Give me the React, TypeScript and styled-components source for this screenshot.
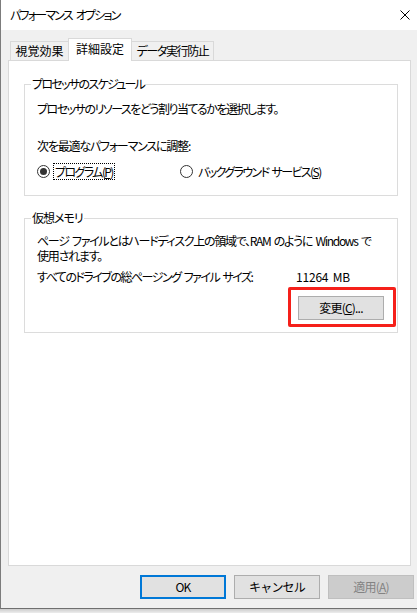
import React from 'react';
import styled, { createGlobalStyle } from 'styled-components';

const GlobalStyle = createGlobalStyle`
  html, body { margin: 0; padding: 0; background: #ececec; }
  body {
    font-family: "Noto Sans CJK JP", "Noto Sans", sans-serif;
    font-size: 12px;
    color: #000;
    font-feature-settings: "palt";
    letter-spacing: -1.2px;
    word-spacing: 2px;
  }
  * { box-sizing: border-box; }
`;

const Window = styled.div`
  width: 417px;
  height: 609px;
  background: #f0f0f0;
  border-left: 1px solid #7c7c7c;
  border-bottom: 1px solid #6f6f6f;
  display: flex;
  flex-direction: column;
`;

const Shadow = styled.div`
  height: 4px;
  background: linear-gradient(#cdcdcd, #ededed);
`;

const TitleBar = styled.div`
  height: 30px;
  flex: none;
  background: #fff;
  display: flex;
  align-items: center;
  justify-content: space-between;
  padding: 0 7px 0 9px;
`;

const Title = styled.span`
  font-size: 12px;
  line-height: 16px;
  letter-spacing: -1.8px;
  word-spacing: 3px;
`;

const CloseButton = styled.span`
  display: flex;
  width: 10px;
  height: 10px;
`;

const Body = styled.div`
  flex: 1;
  display: flex;
  flex-direction: column;
  padding: 8px 0 0 7px;
`;

const TabStrip = styled.div`
  display: flex;
  align-items: flex-end;
  height: 22px;
  padding-left: 2px;
  position: relative;
  z-index: 1;
`;

const Tab = styled.div<{ $active?: boolean; $w: number; $ls?: number }>`
  width: ${p => p.$w}px;
  height: ${p => (p.$active ? 23 : 19)}px;
  margin-bottom: ${p => (p.$active ? -1 : 0)}px;
  margin-left: -1px;
  &:first-child { margin-left: 0; }
  border: 1px solid #d9d9d9;
  border-bottom: none;
  background: ${p => (p.$active ? '#fff' : '#f0f0f0')};
  position: relative;
  z-index: ${p => (p.$active ? 2 : 1)};
  display: flex;
  align-items: center;
  justify-content: center;
  padding-bottom: ${p => (p.$active ? 2 : 0)}px;
  line-height: 16px;
  letter-spacing: ${p => p.$ls ?? 0}px;
  white-space: nowrap;
`;

const Panel = styled.div`
  width: 403px;
  height: 506px;
  flex: none;
  background: #fff;
  border: 1px solid #d9d9d9;
  padding: 15px 12px 0 15px;
  display: flex;
  flex-direction: column;
`;

const Group = styled.fieldset<{ $gap?: number }>`
  margin: ${p => p.$gap ?? 0}px 0 0 0;
  padding: 0;
  min-width: 0;
  border: 1px solid #dcdcdc;
`;

const Legend = styled.legend<{ $ls?: number }>`
  margin-left: 6px;
  padding: 0 1px;
  line-height: 16px;
  font-size: 12px;
  letter-spacing: ${p => p.$ls ?? -1.2}px;
`;

const GroupBody = styled.div<{ $pad: string }>`
  padding: ${p => p.$pad};
  display: flex;
  flex-direction: column;
`;

const Line = styled.div<{ $lh?: number; $mt?: number; $ls?: number }>`
  line-height: ${p => p.$lh ?? 16}px;
  margin-top: ${p => p.$mt ?? 0}px;
  letter-spacing: ${p => p.$ls ?? -1.2}px;
  white-space: nowrap;
`;

const RadioRow = styled.div`
  display: flex;
  align-items: center;
  height: 17px;
  margin-top: 9px;
`;

const RadioItem = styled.label<{ $w?: number }>`
  display: flex;
  align-items: center;
  width: ${p => (p.$w ? `${p.$w}px` : 'auto')};
  flex: none;
`;

const RadioCircle = styled.span<{ $on?: boolean }>`
  width: 13px;
  height: 13px;
  border-radius: 50%;
  border: 1px solid #333;
  display: flex;
  align-items: center;
  justify-content: center;
  margin-right: 3px;
  &::after {
    content: "";
    width: 7px;
    height: 7px;
    border-radius: 50%;
    background: ${p => (p.$on ? '#333' : 'transparent')};
  }
`;

const RadioLabel = styled.span<{ $focus?: boolean }>`
  line-height: 15px;
  padding: 0 1px;
  border: 1px dotted ${p => (p.$focus ? '#000' : 'transparent')};
  letter-spacing: -1.6px;
  white-space: nowrap;
`;

const SizeRow = styled.div`
  display: flex;
  line-height: 15px;
  margin-top: 6px;
`;

const SizeLabel = styled.span`
  width: 259px;
  flex: none;
  letter-spacing: -1.5px;
  white-space: nowrap;
`;

const SizeValue = styled.span`
  letter-spacing: -0.2px;
`;

const ActionRow = styled.div`
  display: flex;
  justify-content: flex-end;
  margin-top: 12px;
`;

const Highlight = styled.div`
  position: relative;
  display: flex;
`;

const HighlightFrame = styled.span`
  position: absolute;
  top: -9px;
  left: -10px;
  right: -12px;
  bottom: -7px;
  border: 3px solid #f5201a;
  border-radius: 2px;
  pointer-events: none;
`;

const Button = styled.button<{ $variant?: 'default' | 'primary' | 'disabled'; $h?: number }>`
  width: 86px;
  height: ${p => p.$h ?? 24}px;
  font-family: inherit;
  font-size: 12px;
  line-height: 16px;
  letter-spacing: -0.8px;
  padding: 0;
  margin: 0;
  border-radius: 0;
  color: ${p => (p.$variant === 'disabled' ? '#838383' : '#000')};
  background: ${p => (p.$variant === 'disabled' ? '#cccccc' : '#e1e1e1')};
  border: ${p =>
    p.$variant === 'primary'
      ? '2px solid #0078d7'
      : p.$variant === 'disabled'
      ? '1px solid #bfbfbf'
      : '1px solid #adadad'};
  white-space: nowrap;
`;

const ButtonBar = styled.div`
  display: flex;
  justify-content: flex-end;
  gap: 8px;
  margin-top: 9px;
  padding-right: 3px;
`;

export default function App() {
  return (
    <>
      <GlobalStyle />
      <Window>
        <TitleBar>
          <Title>パフォーマンス オプション</Title>
          <CloseButton>
            <svg width="10" height="10" viewBox="0 0 10 10">
              <path d="M0.5 0.5 L9.5 9.5 M9.5 0.5 L0.5 9.5" stroke="#000" strokeWidth="1" fill="none" />
            </svg>
          </CloseButton>
        </TitleBar>
        <Body>
          <TabStrip>
            <Tab $w={59}>視覚効果</Tab>
            <Tab $w={64} $active>詳細設定</Tab>
            <Tab $w={83} $ls={-1.4}>データ実行防止</Tab>
          </TabStrip>
          <Panel>
            <Group>
              <Legend $ls={-1.7}>プロセッサのスケジュール</Legend>
              <GroupBody $pad="9px 12px 15px 12px">
                <Line $ls={-1.5}>プロセッサのリソースをどう割り当てるかを選択します。</Line>
                <Line $mt={21} $ls={-1.2}>次を最適なパフォーマンスに調整:</Line>
                <RadioRow>
                  <RadioItem $w={143}>
                    <RadioCircle $on />
                    <RadioLabel $focus>プログラム(<u>P</u>)</RadioLabel>
                  </RadioItem>
                  <RadioItem>
                    <RadioCircle />
                    <RadioLabel>バックグラウンド サービス(<u>S</u>)</RadioLabel>
                  </RadioItem>
                </RadioRow>
              </GroupBody>
            </Group>
            <Group $gap={14}>
              <Legend $ls={-1}>仮想メモリ</Legend>
              <GroupBody $pad="7px 13px 12px 12px">
                <Line $lh={15} $ls={-1.3}>ページ ファイルとはハードディスク上の領域で、RAM のように Windows で</Line>
                <Line $lh={15} $ls={-1.2}>使用されます。</Line>
                <SizeRow>
                  <SizeLabel>すべてのドライブの総ページング ファイル サイズ:</SizeLabel>
                  <SizeValue>11264 MB</SizeValue>
                </SizeRow>
                <ActionRow>
                  <Highlight>
                    <Button>変更(<u>C</u>)...</Button>
                    <HighlightFrame />
                  </Highlight>
                </ActionRow>
              </GroupBody>
            </Group>
          </Panel>
          <ButtonBar>
            <Button $variant="primary">OK</Button>
            <Button>キャンセル</Button>
            <Button $variant="disabled">適用(<u>A</u>)</Button>
          </ButtonBar>
        </Body>
      </Window>
      <Shadow />
    </>
  );
}
